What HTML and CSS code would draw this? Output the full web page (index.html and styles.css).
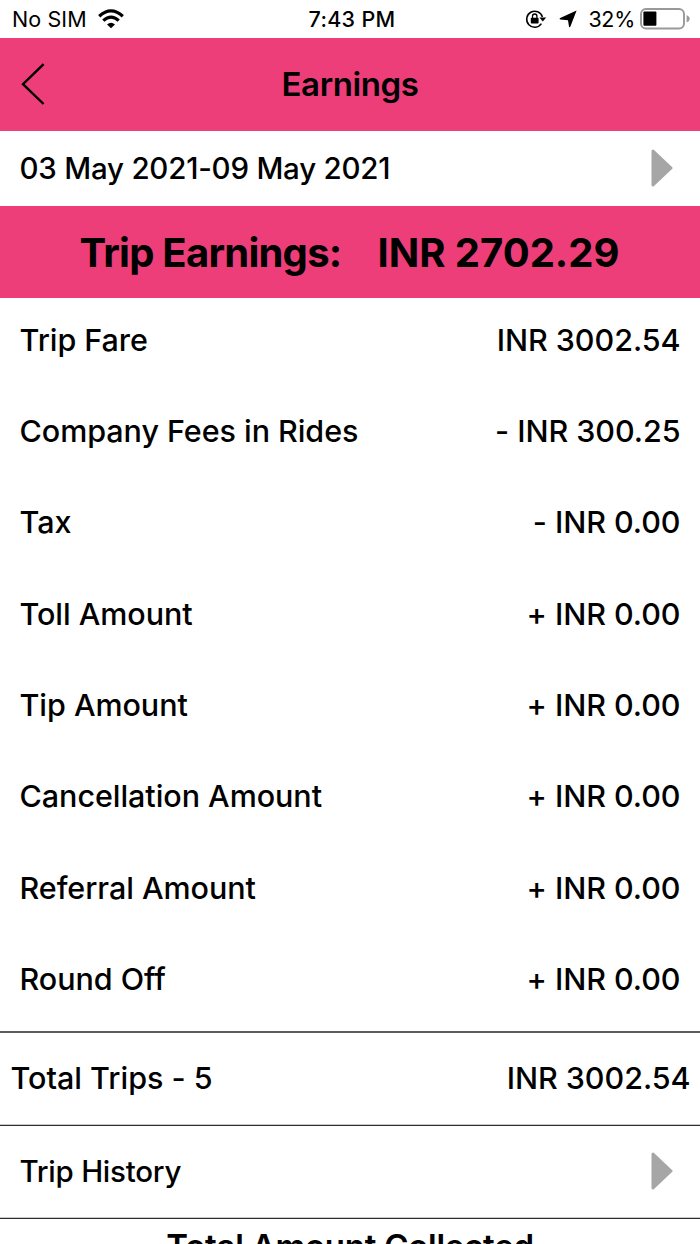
FILE: index.html
```
<!DOCTYPE html>
<html lang="en">
<head>
  <meta charset="UTF-8" />
  <meta name="viewport" content="width=device-width, initial-scale=1.0" />
  <title>Earnings</title>
  <link rel="stylesheet" href="styles.css">
</head>
<body>
  <div class="screen">
    <div class="status-bar">
      <div class="status-left">
        <span class="carrier">No SIM</span>
        <svg class="wifi" width="26" height="20" viewBox="0 0 26 20">
          <g fill="none" stroke="#000" stroke-width="3.2">
            <path d="M1.2 7.2 Q13 -3.4 24.8 7.2" />
            <path d="M5.3 11.6 Q13 4.6 20.7 11.6" />
          </g>
          <path d="M9 15.4 Q13 12 17 15.4 L13 19.2 Z" />
        </svg>
      </div>
      <span class="time">7:43 PM</span>
      <div class="status-right">
        <svg class="lock" width="22" height="20" viewBox="0 0 22 20">
          <path d="M16.4 14.6 A8 8 0 1 1 17.4 8" fill="none" stroke="#000" stroke-width="1.5" />
          <path d="M14.4 8.4 H21.2 L17.8 12.4 Z" />
          <rect x="5.8" y="8.8" width="7.8" height="5.8" rx="0.8" />
          <path d="M7.5 9 V7.2 A2.2 2.2 0 0 1 11.9 7.2 V9" fill="none" stroke="#000" stroke-width="1.3" />
        </svg>
        <svg class="location" width="18" height="18" viewBox="0 0 18 18">
          <path d="M17.6 0.4 L11.4 16.6 Q10.4 18.2 10 16.4 L9 10.2 L1.4 9.6 Q-0.2 9 1.2 8 Z" />
        </svg>
        <span class="percent">32%</span>
        <svg class="battery" width="50" height="22" viewBox="0 0 50 22">
          <rect x="1" y="1" width="43" height="19.5" rx="5" fill="none" stroke="#999" stroke-width="1.9" />
          <rect x="3.4" y="3.6" width="13" height="14.2" rx="1" />
          <path d="M46.6 7 Q49.8 8.4 49.8 10.8 Q49.8 13.2 46.6 14.6 Z" fill="#999" />
        </svg>
      </div>
    </div>

    <div class="header">
      <svg class="back" width="26" height="44" viewBox="0 0 26 44">
        <path d="M23.6 2.2 L3 22.2 L23.6 42" fill="none" stroke="#000" stroke-width="2.4" />
      </svg>
      <h1>Earnings</h1>
    </div>

    <div class="date-row">
      <span class="dates">03 May 2021-09 May 2021</span>
      <svg class="arrow" width="22" height="38" viewBox="0 0 22 38">
        <path d="M2 2 L20 19 L2 36 Z" fill="#a6a6a6" stroke="#a6a6a6" stroke-width="3" stroke-linejoin="round" />
      </svg>
    </div>

    <div class="trip-earnings">
      <span class="earn-label">Trip Earnings:</span>
      <span class="earn-value">INR 2702.29</span>
    </div>

    <div class="breakdown">
      <div class="row"><span>Trip Fare</span><span class="amount">INR 3002.54</span></div>
      <div class="row"><span>Company Fees in Rides</span><span class="amount">- INR 300.25</span></div>
      <div class="row"><span>Tax</span><span class="amount">- INR 0.00</span></div>
      <div class="row"><span>Toll Amount</span><span class="amount">+ INR 0.00</span></div>
      <div class="row"><span>Tip Amount</span><span class="amount">+ INR 0.00</span></div>
      <div class="row"><span>Cancellation Amount</span><span class="amount">+ INR 0.00</span></div>
      <div class="row"><span>Referral Amount</span><span class="amount">+ INR 0.00</span></div>
      <div class="row"><span>Round Off</span><span class="amount">+ INR 0.00</span></div>
    </div>

    <div class="total-row">
      <span>Total Trips - 5</span>
      <span class="amount">INR 3002.54</span>
    </div>

    <div class="history-row">
      <span>Trip History</span>
      <svg class="arrow" width="22" height="38" viewBox="0 0 22 38">
        <path d="M2 2 L20 19 L2 36 Z" fill="#a6a6a6" stroke="#a6a6a6" stroke-width="3" stroke-linejoin="round" />
      </svg>
    </div>

    <div class="collected">Total Amount Collected</div>
  </div>
</body>
</html>
```

FILE: styles.css
```
body {
  margin: 0;
  font-family: Inter, "Liberation Sans", sans-serif;
  font-feature-settings: "calt" 0;
  background-color: #fff;
  color: #000;
}

.screen {
  width: 700px;
  height: 1244px;
  overflow: hidden;
  box-sizing: border-box;
  font-size: 30.5px;
  font-weight: 500;
  white-space: nowrap;
}

.status-bar {
  display: grid;
  grid-template-columns: 1fr auto 1fr;
  align-items: center;
  height: 38px;
  padding: 0 10px 0 12px;
  box-sizing: border-box;
  font-size: 21.5px;
  font-weight: 400;
}

.status-left,
.status-right {
  display: flex;
  align-items: center;
}

.status-left {
  gap: 11.5px;
}

.carrier {
  letter-spacing: 0.1px;
}

.status-right {
  justify-content: flex-end;
}

.time {
  padding-left: 2px;
  font-weight: 500;
  letter-spacing: 0.3px;
}

.location {
  margin: 0 11px 0 12px;
}

.percent {
  letter-spacing: -0.3px;
}

.battery {
  margin-left: 5px;
}

.header {
  display: grid;
  grid-template-columns: 60px 1fr 60px;
  align-items: center;
  height: 92.5px;
  padding: 0 20px;
  box-sizing: border-box;
  background-color: #ed3e7a;
}

.header h1 {
  margin: 0;
  font-size: 33px;
  font-weight: 600;
  letter-spacing: -0.4px;
  text-align: center;
}

.date-row,
.total-row,
.history-row {
  display: flex;
  justify-content: space-between;
  align-items: center;
  box-sizing: border-box;
}

.date-row {
  height: 75px;
  padding: 0 27px 0 19.5px;
  font-size: 29.5px;
  letter-spacing: -0.22px;
}

.trip-earnings {
  display: flex;
  justify-content: center;
  align-items: center;
  gap: 36px;
  height: 92.5px;
  padding-top: 1px;
  box-sizing: border-box;
  background-color: #ed3e7a;
  font-size: 40px;
  font-weight: 700;
}

.earn-label {
  margin-left: -1px;
  letter-spacing: -0.75px;
}

.breakdown {
  display: flex;
  flex-direction: column;
  gap: 51.4px;
  height: 733px;
  padding: 21.5px 19.5px 0;
  box-sizing: border-box;
}

.row {
  display: flex;
  justify-content: space-between;
  line-height: 40px;
  letter-spacing: -0.05px;
}

.amount {
  letter-spacing: -0.05px;
}

.total-row,
.history-row,
.collected {
  border-top: 1px solid #2e2e2e;
  box-shadow: 0 -1px #c8c8c8;
}

.total-row {
  height: 94px;
  padding: 0 9.5px 3px 10.5px;
  border-top: 2px solid #5c5c5c;
  box-shadow: none;
}

.history-row {
  height: 93px;
  padding: 0 27px 2px 19.5px;
  font-size: 29.5px;
  letter-spacing: -0.25px;
}

.collected {
  padding-top: 7px;
  font-size: 33px;
  font-weight: 600;
  letter-spacing: -0.25px;
  text-align: center;
}
```
